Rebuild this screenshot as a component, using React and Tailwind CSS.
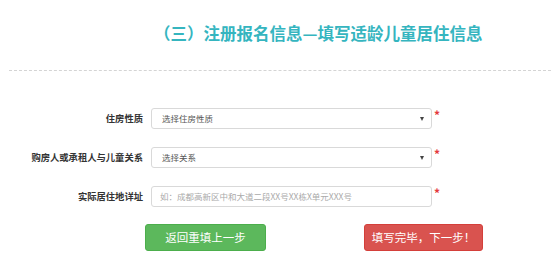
import React from "react";

const font = { fontFamily: '"Noto Sans CJK SC", "Noto Sans", sans-serif' };

function Row({ label, children }) {
  return (
    <div className="flex items-center h-[21px]">
      <div className="w-[143px] text-right text-[9.3px] font-bold text-[#333] leading-none">
        {label}
      </div>
      <div className="ml-[8px] w-[281px] h-[21px]">{children}</div>
      <span className="self-start ml-[2px] mt-[1px] text-[12px] font-bold leading-none text-[#e4393c]">*</span>
    </div>
  );
}

function FakeSelect({ text }) {
  return (
    <div className="flex items-center justify-between h-full border border-[#d9d9d9] rounded-[3px] pl-[10px] pr-[7px] bg-white">
      <span className="text-[8.5px] text-[#555] leading-none">{text}</span>
      <span className="w-0 h-0 border-l-[2.5px] border-r-[2.5px] border-t-[4px] border-l-transparent border-r-transparent border-t-[#444]" />
    </div>
  );
}

export default function App() {
  return (
    <div className="w-[552px] h-[271px] bg-white overflow-hidden" style={font}>
      <div className="h-[66px] flex items-center pl-[154px]">
        <h1 className="text-[16.5px] font-bold text-[#35b5bf] leading-none">
          （三）注册报名信息—填写适龄儿童居住信息
        </h1>
      </div>
      <div className="mt-[4px] ml-[9px] mr-[1px] border-t border-dashed border-[#d4d4d4]" />

      <div className="mt-[37px] flex flex-col gap-[18px]">
        <Row label="住房性质">
          <FakeSelect text="选择住房性质" />
        </Row>
        <Row label="购房人或承租人与儿童关系">
          <FakeSelect text="选择关系" />
        </Row>
        <Row label="实际居住地详址">
          <div className="flex items-center h-full border border-[#d9d9d9] rounded-[3px] pl-[8px] bg-white">
            <span className="text-[8.5px] text-[#aaa] leading-none">
              如：成都高新区中和大道二段XX号XX栋X单元XXX号
            </span>
          </div>
        </Row>
      </div>

      <div className="mt-[17px] flex">
        <button className="ml-[145px] w-[121px] h-[27px] rounded-[3px] bg-[#5cb85c] border border-[#4cae4c] text-white text-[11.5px] leading-none">
          返回重填上一步
        </button>
        <button className="ml-[98px] w-[119px] h-[27px] rounded-[3px] bg-[#d9534f] border border-[#d43f3a] text-white text-[11.5px] leading-none">
          填写完毕，下一步！
        </button>
      </div>
    </div>
  );
}
